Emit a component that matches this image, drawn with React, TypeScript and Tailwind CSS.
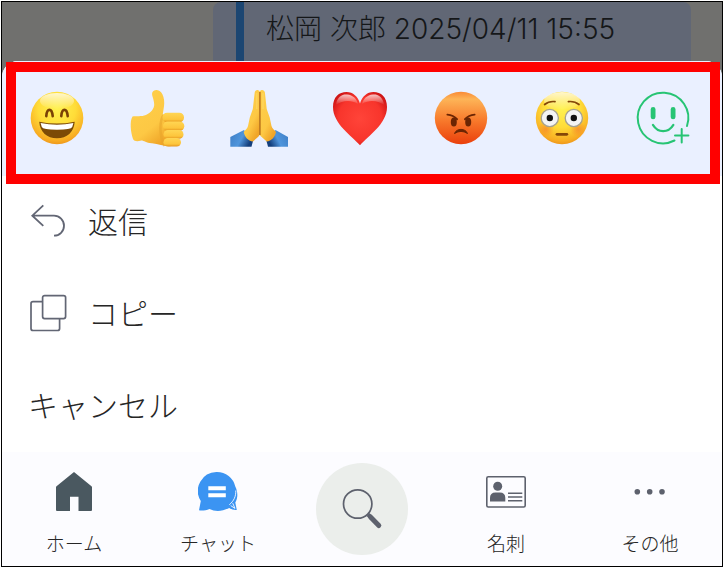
import type { ReactNode } from "react";

/* ───────────────────────────────────── */

interface Item {
  label: string;
  icon: ReactNode;
}

function Emoji({ children }: { children: ReactNode }) {
  return (
    <svg viewBox="0 0 60 60" className="size-[60px]" aria-hidden="true">
      {children}
    </svg>
  );
}

function Icon({ children }: { children: ReactNode }) {
  return (
    <svg viewBox="0 0 40 40" fill="none" className="size-10 shrink-0" aria-hidden="true">
      {children}
    </svg>
  );
}

/* gradients shared by the reaction icons */
function Gradients() {
  return (
    <svg className="absolute size-0" aria-hidden="true">
      <defs>
        <radialGradient id="yellowFace" cx="0.5" cy="0.32" r="0.72">
          <stop offset="0" stopColor="#fff250" />
          <stop offset="0.5" stopColor="#ffdc38" />
          <stop offset="0.85" stopColor="#f8ac22" />
          <stop offset="1" stopColor="#e98d18" />
        </radialGradient>
        <linearGradient id="shine" x1="0" y1="0" x2="0" y2="1">
          <stop offset="0" stopColor="#fff" stopOpacity="0.75" />
          <stop offset="1" stopColor="#fff" stopOpacity="0" />
        </linearGradient>
        <linearGradient id="redFace" x1="0" y1="0" x2="0" y2="1">
          <stop offset="0" stopColor="#f98a35" />
          <stop offset="0.14" stopColor="#fdb457" />
          <stop offset="0.55" stopColor="#f8792b" />
          <stop offset="1" stopColor="#ea400c" />
        </linearGradient>
        <linearGradient id="skin" x1="0" y1="0" x2="0.6" y2="1">
          <stop offset="0" stopColor="#ffd04a" />
          <stop offset="0.7" stopColor="#fdc844" />
          <stop offset="1" stopColor="#f0a528" />
        </linearGradient>
        <linearGradient id="finger" x1="0" y1="0" x2="0" y2="1">
          <stop offset="0" stopColor="#ffd654" />
          <stop offset="0.7" stopColor="#fdc53c" />
          <stop offset="1" stopColor="#e5951d" />
        </linearGradient>
        <linearGradient id="sleeveLeft" x1="0" y1="0" x2="1" y2="0.4">
          <stop offset="0" stopColor="#3c7cc4" />
          <stop offset="0.6" stopColor="#4f95dc" />
          <stop offset="1" stopColor="#143f7d" />
        </linearGradient>
        <linearGradient id="sleeveRight" x1="1" y1="0" x2="0" y2="0.4">
          <stop offset="0" stopColor="#3c7cc4" />
          <stop offset="0.6" stopColor="#4f95dc" />
          <stop offset="1" stopColor="#143f7d" />
        </linearGradient>
        <radialGradient id="heart" cx="0.5" cy="0.5" r="0.62">
          <stop offset="0" stopColor="#ff4439" />
          <stop offset="0.65" stopColor="#f8352c" />
          <stop offset="1" stopColor="#c80f12" />
        </radialGradient>
        <radialGradient id="blush">
          <stop offset="0" stopColor="#f4692c" stopOpacity="0.5" />
          <stop offset="1" stopColor="#f4692c" stopOpacity="0" />
        </radialGradient>
      </defs>
    </svg>
  );
}

/* ───────────────────────────────────── */

const reactions: Item[] = [
  {
    label: "笑顔",
    icon: (
      <Emoji>
        <circle cx="30" cy="30" r="26.3" fill="url(#yellowFace)" />
        <ellipse cx="30" cy="13" rx="17" ry="8" fill="url(#shine)" />
        <path
          d="M19.3 28.2c.6-8.4 5.6-8.4 6.4 0M34.3 28.2c.6-8.4 5.6-8.4 6.4 0"
          fill="none"
          stroke="#7a4205"
          strokeWidth="2.6"
          strokeLinecap="round"
        />
        <path d="M12.2 33.7Q30 37.5 47.7 33.7C47 44 40 50.3 30 50.3S13 44 12.2 33.7Z" fill="#7c4a06" />
        <path d="M13.6 35Q30 38.4 46.4 35L45.2 39Q44 41.6 30 41.8 16 41.6 14.8 39Z" fill="#fff" />
      </Emoji>
    ),
  },
  {
    label: "いいね",
    icon: (
      <Emoji>
        <path
          d="M24.3 4.5C25.6 1.2 31.6.8 34.4 6.2c1.7 3.2 2.2 8.2 1.6 12l-1.3 8.5c3-1.8 8-2 10.3-1L46 57.5c-7 2-14-1.1-22-2.3-6 .2-8.5-3.2-11.5-2.5-3 .8-6.5.7-7.5-1.7C2.6 44 1.6 33 4.5 28.6c3.500-.9 9 .2 13.4-1.6 5-2.400 8.400-6.300 8.300-10.800C26 11 23.300 7 24.300 4.500Z"
          fill="url(#skin)"
        />
        <path d="M35.500 27c-4 6-4.500 20 1 31" fill="none" stroke="#e8a52c" strokeWidth="2.500" opacity="0.6" />
        <rect x="34.5" y="24.7" width="21.5" height="9.6" rx="4.6" fill="url(#finger)" />
        <rect x="35" y="33.4" width="21.3" height="9.4" rx="4.6" fill="url(#finger)" />
        <rect x="35.5" y="42" width="20" height="8.8" rx="4.4" fill="url(#finger)" />
        <rect x="35.5" y="50" width="17.5" height="8.6" rx="4.3" fill="url(#finger)" />
      </Emoji>
    ),
  },
  {
    label: "お願い",
    icon: (
      <Emoji>
        <path d="M1.3 49 15 42l9 11-1.5 5.7H1.3Z" fill="url(#sleeveLeft)" />
        <path d="M59 49 46.5 42l-9 11 1.5 5.7h20Z" fill="url(#sleeveRight)" />
        <path
          d="M30.7 3.5C29.5 1.2 26 1.5 25.7 4.5L23.8 21l-3 8.500L19 38c-.6 2.800-2.700 3.700-4.300 6 1 5 4.300 9 9.300 9.500l5-4.500c1.200-1 1.700-2 1.700-4Z"
          fill="url(#skin)"
        />
        <path
          d="M30.7 3.5C32 1.2 35.4 1.5 35.9 4.5l1.8 16.5 3 8.5 1.8 8.5c.6 2.8 3 3.7 4.5 6-1 5-4.5 9-9.3 9.5l-5-4.5c-1.4-1-2-2-2-4Z"
          fill="url(#skin)"
        />
        <path d="M30.9 4v43" stroke="#b87018" strokeWidth="1.5" />
        <path d="M27.8 5v16M34 5v16" stroke="#ffe27a" strokeWidth="1.2" opacity="0.5" />
      </Emoji>
    ),
  },
  {
    label: "ハート",
    icon: (
      <Emoji>
        <path
          d="M30 57.3C22 48 3 36 3 19 3 9 9 4 16.5 4 23 4 28 8.5 30 15.5 32 8.5 37 4 43.5 4 51 4 57 9 57 19 57 36 38 48 30 57.3Z"
          fill="url(#heart)"
        />
        <path d="M6 17C7 8 13 6 17 6.5 23 7 27 11 28 16 20 11 12 13 6 17Z" fill="url(#shine)" />
        <path d="M54 17C53 8 47 6 43 6.5 37 7 33 11 32 16 40 11 48 13 54 17Z" fill="url(#shine)" />
      </Emoji>
    ),
  },
  {
    label: "怒り",
    icon: (
      <Emoji>
        <circle cx="30" cy="30" r="26.2" fill="url(#redFace)" />
        <ellipse cx="22.8" cy="34" rx="3" ry="4.6" fill="#6b2503" />
        <ellipse cx="37.2" cy="34" rx="3" ry="4.6" fill="#6b2503" />
        <path
          d="M16.4 26.6q6 .4 9.6 4.6M43.6 26.6q-6 .4-9.6 4.6"
          fill="none"
          stroke="#6b2503"
          strokeWidth="1.9"
          strokeLinecap="round"
        />
        <path d="M23.500 45.500c1.800-5.500 11.200-5.500 13 0q-6.500-4.200-13 0Z" fill="#6b2503" stroke="#6b2503" strokeLinejoin="round" />
      </Emoji>
    ),
  },
  {
    label: "びっくり",
    icon: (
      <Emoji>
        <circle cx="30" cy="30" r="26.2" fill="url(#yellowFace)" />
        <ellipse cx="30" cy="13" rx="18" ry="9" fill="url(#shine)" />
        <circle cx="14" cy="41" r="8" fill="url(#blush)" />
        <circle cx="46" cy="41" r="8" fill="url(#blush)" />
        <circle cx="17.8" cy="30" r="8.6" fill="#f4f4f4" stroke="#a6a18f" strokeWidth="1.3" />
        <circle cx="41.8" cy="30" r="8.6" fill="#f4f4f4" stroke="#a6a18f" strokeWidth="1.3" />
        <circle cx="17.8" cy="30" r="3.2" fill="#111" />
        <circle cx="41.8" cy="30" r="3.2" fill="#111" />
        <path
          d="M12.6 16.5q4.4-3.6 10.400-2.900M47 16.5q-4.400-3.600-10.600-2.900"
          fill="none"
          stroke="#854708"
          strokeWidth="1.7"
          strokeLinecap="round"
        />
        <path d="M25 46.3h9.8" stroke="#854708" strokeWidth="2.8" strokeLinecap="round" />
      </Emoji>
    ),
  },
  {
    label: "リアクションを追加",
    icon: (
      <Emoji>
        <g fill="none" stroke="#27c474" strokeWidth="2" strokeLinecap="round">
          <path d="M54 38A25.3 25.3 0 1 0 41.5 52.5" />
          <path d="M20 37c5 8.2 15.3 8.2 20.3 0" strokeWidth="2.4" />
          <path d="M48.7 41v13.4M42 47.6h13.4" />
        </g>
        <rect x="17.7" y="19" width="4.8" height="12.3" rx="2.4" fill="#27c474" />
        <rect x="37.7" y="19" width="4.8" height="12.3" rx="2.4" fill="#27c474" />
      </Emoji>
    ),
  },
];

const actions: Item[] = [
  {
    label: "返信",
    icon: (
      <Icon>
        <path
          d="M15.3 3.3 4.3 13.7l11 10.2M4.3 13.7H26a10 10 0 0 1 0 20"
          stroke="#626674"
          strokeWidth="1.8"
        />
      </Icon>
    ),
  },
  {
    label: "コピー",
    icon: (
      <Icon>
        <path
          d="M14.4 7.7H5A2 2 0 0 0 3 9.7V34.5a2 2 0 0 0 2 2H29.6a2 2 0 0 0 2-2V24.6"
          stroke="#626674"
          strokeWidth="1.7"
        />
        <rect x="14.6" y="1.6" width="23" height="23" rx="2" stroke="#626674" strokeWidth="1.7" />
      </Icon>
    ),
  },
];

const tabsLeft: Item[] = [
  {
    label: "ホーム",
    icon: (
      <Icon>
        <path
          d="M20 0 37.5 14.2Q38 14.6 38 15.3V38q0 1-1 1H24.5V24.7H16V39H3q-1 0-1-1V15.3q0-.7.5-1.1Z"
          fill="#4a5860"
        />
      </Icon>
    ),
  },
  {
    label: "チャット",
    icon: (
      <Icon>
        <path
          d="M19 0A18.9 18.9 0 0 1 37.3 14.5C40 20 40 26 37.300 30.5L38.800 38q-4 .4-7.600-2.100C23 40 17 39.600 11.500 37 8 38.400 4 38.800 1 38.300L2.800 29A18.900 18.900 0 0 1 19 0Z"
          fill="#3b94f2"
        />
        <path
          d="M37.8 18.5c.2 6-2 10.5-6.5 14.2M34.7 31.2l2.3 5.2-4.3-2.8"
          stroke="#fcfcff"
          strokeWidth="0.9"
        />
        <path d="M10.3 16.2h17.5M10.3 23.3h17.5" stroke="#fff" strokeWidth="4" />
      </Icon>
    ),
  },
];

const tabsRight: Item[] = [
  {
    label: "名刺",
    icon: (
      <Icon>
        <rect x="0.8" y="4.8" width="38.4" height="30.2" rx="1.5" stroke="#5d616d" strokeWidth="1.6" />
        <circle cx="11.7" cy="14.3" r="4.5" fill="#5d616d" />
        <path d="M4 29.4V26q0-5.5 5.5-5.5h4.3q5.5 0 5.5 5.5v3.4Z" fill="#5d616d" />
        <path d="M22 21.3h14.3M22 25h14.3M22 28.7h14.3" stroke="#5d616d" strokeWidth="1.5" />
      </Icon>
    ),
  },
  {
    label: "その他",
    icon: (
      <Icon>
        <circle cx="7.3" cy="19.7" r="2.8" fill="#5d616d" />
        <circle cx="19.7" cy="19.7" r="2.8" fill="#5d616d" />
        <circle cx="32" cy="19.7" r="2.8" fill="#5d616d" />
      </Icon>
    ),
  },
];

function Tab({ label, icon }: Item) {
  return (
    <a href="#" className="flex flex-col items-center gap-[19px] pt-5">
      {icon}
      <span className="text-[19px] leading-6">{label}</span>
    </a>
  );
}

/* ───────────────────────────────────── */

export default function App() {
  return (
    <div className="bg-white pt-px pl-px font-['Noto_Sans_CJK_JP',sans-serif] font-light text-[#262626]">
      <Gradients />
      <main className="border border-black bg-[#70706e]">
        {/* MESSAGE BEHIND THE SHEET */}
        <div className="mr-[31px] ml-[211px] flex h-[59px] rounded-t-lg bg-[#616775] pl-[23px]">
          <p className="border-l-8 border-[#1c4672] pl-[22px] font-['Inter','Noto_Sans_CJK_JP',sans-serif] text-[28px] leading-[54px] whitespace-nowrap text-[#151719]">
            松岡 次郎 2025/04/11 15:55
          </p>
        </div>

        <div className="rounded-t-2xl bg-white">
          {/* REACTIONS */}
          <div className="relative grid grid-cols-7 rounded-t-2xl bg-[#eaf0ff] pt-[27px] pr-2 pb-7 pl-1">
            {reactions.map((r) => (
              <button key={r.label} type="button" aria-label={r.label} className="flex justify-center">
                {r.icon}
              </button>
            ))}
            <div className="pointer-events-none absolute top-px right-[2px] -bottom-2 left-1 border-10 border-[#ff0000]" />
          </div>

          {/* ACTIONS */}
          {actions.map((a) => (
            <button
              key={a.label}
              type="button"
              className="flex h-[92px] w-full items-center gap-5 pl-[26px] text-[30px] leading-10"
            >
              {a.icon}
              <span className="pb-1">{a.label}</span>
            </button>
          ))}
          <button
            type="button"
            className="flex h-[92px] w-full items-center pl-[26px] text-[30px] leading-10"
          >
            <span className="pb-1">キャンセル</span>
          </button>
        </div>

        {/* TAB BAR */}
        <nav className="grid h-[114px] grid-cols-5 bg-[#fcfcff]">
          {tabsLeft.map((t) => (
            <Tab key={t.label} {...t} />
          ))}
          <button
            type="button"
            aria-label="検索"
            className="mt-[11px] size-[92px] justify-self-center rounded-full bg-[#ebeeeb]"
          >
            <svg viewBox="0 0 92 92" fill="none" stroke="#5d616d" aria-hidden="true">
              <circle cx="41.7" cy="41" r="14.2" strokeWidth="1.7" />
              <path d="m52 51.5 2 2" strokeWidth="4" />
              <path d="m54.5 54 8.3 8.5" strokeWidth="5" strokeLinecap="round" />
            </svg>
          </button>
          {tabsRight.map((t) => (
            <Tab key={t.label} {...t} />
          ))}
        </nav>
      </main>
    </div>
  );
}
